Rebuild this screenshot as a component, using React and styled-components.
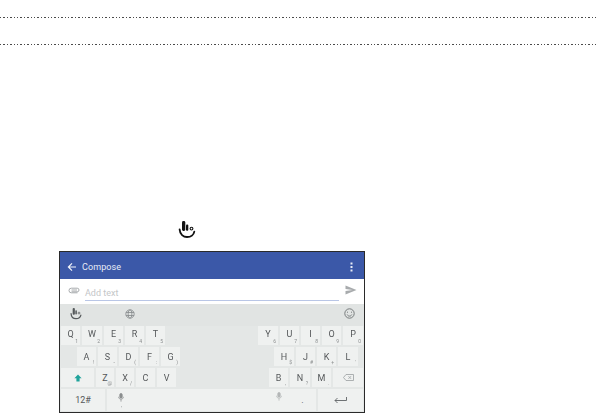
import React from "react";
import styled, { createGlobalStyle } from "styled-components";

const Global = createGlobalStyle`
  html, body { margin: 0; padding: 0; background: #fff; }
  body { font-family: Roboto, "Liberation Sans", sans-serif; width: 596px; height: 414px; overflow: hidden; }
`;
const Page = styled.div`display: flex; flex-direction: column; width: 596px; height: 414px;`;
const Rule = styled.div`
  height: 1px; margin-top: ${p => p.$top}px;
  background: repeating-linear-gradient(90deg, #4a4a4a 0, #4a4a4a 1.4px, transparent 1.4px, transparent 3.4px);
`;
const LogoLine = styled.div`display: flex; height: 18px; margin: 176px 0 12px 178px;`;
const Phone = styled.div`
  width: 304px; height: 160px; margin-left: 59px; box-sizing: content-box;
  border: 1px solid #2a2a2a; display: flex; flex-direction: column; overflow: hidden;
  background: #e4e7e6;
`;
const Blur = styled.div`filter: blur(0.45px); display: flex; flex-direction: column; height: 100%;`;
const Header = styled.header`
  height: 25px; padding: 2px 11px 0 7px; background: #3b58a8; color: #e8ecf6; display: flex; align-items: center;
  font-size: 9px; gap: 5px;
`;
const Title = styled.span`flex: 1; letter-spacing: 0.1px;`;
const InputRow = styled.div`
  height: 22px; padding: 0 7px 3px 8px; background: #fff; display: flex; align-items: center; gap: 5px;
`;
const Field = styled.div`
  flex: 1; height: 14px; border-bottom: 1px solid #b9c6e6; color: #c4c6c8; font-size: 9px;
  line-height: 14px; margin: 6px 1px 0 0;
`;
const Suggest = styled.div`
  height: 19px; display: flex; align-items: center; padding: 0 9px 3px 10px; background: #e1e4e3;
`;
const SuggestGlobe = styled.div`margin-left: 43px; flex: 1; display: flex;`;
const Keys = styled.div`display: flex; flex-direction: column; gap: 2px; padding: 0 1px;`;
const KeyRow = styled.div`
  display: flex; justify-content: space-between; height: ${p => p.$h || 19}px;
  padding: 0 ${p => p.$right || 0}px 0 ${p => p.$left || 0}px;
`;
const Group = styled.div`display: flex; gap: 2px;`;
const Key = styled.div`
  position: relative; width: ${p => p.$w}px; box-sizing: border-box; background: #eff1f0; color: #55585a;
  display: flex; align-items: center; justify-content: center; font-size: 9px;
  padding-bottom: ${p => p.$lift || 0}px;
`;
const Sub = styled.span`position: absolute; right: 2px; bottom: 1px; font-size: 5px; line-height: 5px; color: #8b8e8f;`;
const Space = styled(Key)`flex: 1; justify-content: flex-end; align-items: flex-start; padding: 3px 7px 0 0;`;
const MicKey = styled(Key)`
  flex-direction: column; padding-bottom: 5px;
  ${Sub} { right: 13px; bottom: 3px; }
`;

const Logo = ({ s = 18, c = "#111" }) => (
  <svg width={s} height={s} viewBox="0 0 18 18">
    <rect x="4" y="0" width="3.3" height="10" rx="1.4" fill={c} />
    <rect x="8" y="3.4" width="2.3" height="6.4" rx="1" fill={c} />
    <circle cx="13.5" cy="7.6" r="1.4" fill="none" stroke={c} strokeWidth="1.1" />
    <path d="M1.6 8.4C1.9 13.4 5.4 16 9 16s6.6-2 7.3-5.4" fill="none" stroke={c} strokeWidth="1.8" strokeLinecap="round" />
  </svg>
);
const Back = () => (
  <svg width="10" height="10" viewBox="0 0 10 10"><path d="M9 5H1.5M5 1.4 1.4 5 5 8.6" fill="none" stroke="#f2f4fa" strokeWidth="1.2" /></svg>
);
const Dots = () => (
  <svg width="3" height="10" viewBox="0 0 3 10" fill="#e8ecf6"><rect x=".5" y=".5" width="2" height="2" /><rect x=".5" y="4" width="2" height="2" /><rect x=".5" y="7.5" width="2" height="2" /></svg>
);
const Clip = () => (
  <svg width="12" height="8" viewBox="0 0 12 8" fill="none" stroke="#a9acae" strokeWidth="1"><path d="M3.5 5.8h5.7a1.8 1.8 0 0 0 0-3.6H3.3a2 2 0 0 0 0 4.6h6.2" /><path d="M3.5 4h5.5" /></svg>
);
const Send = () => (
  <svg width="12" height="10" viewBox="0 0 12 10"><path d="M.5.5 11.5 5 .5 9.5V6l7-1-7-1z" fill="#a8abad" /></svg>
);
const Globe = () => (
  <svg width="10" height="10" viewBox="0 0 10 10" fill="none" stroke="#85898b" strokeWidth=".8"><circle cx="5" cy="5" r="4.2" /><ellipse cx="5" cy="5" rx="1.9" ry="4.2" /><path d="M1 3.5h8M1 6.5h8" /></svg>
);
const Smile = () => (
  <svg width="11" height="11" viewBox="0 0 11 11" fill="none" stroke="#6b6f71" strokeWidth=".9"><circle cx="5.5" cy="5.5" r="4.7" /><path d="M3.2 6.6c.6 1.1 1.4 1.5 2.3 1.5s1.7-.4 2.3-1.5" /><path d="M3.5 3.7v1M7.5 3.7v1" /></svg>
);
const Shift = () => (
  <svg width="8" height="8" viewBox="0 0 8 8"><path d="M4 .5 7.6 4.3H5.6V7.5H2.4V4.3H.4z" fill="#1fa39b" /></svg>
);
const Backspace = () => (
  <svg width="11" height="7" viewBox="0 0 11 7" fill="none" stroke="#a4a8a9" strokeWidth=".9"><path d="M3 .5h7.5v6H3L.5 3.5z" /><path d="M5.5 2.2 8 4.8M8 2.2 5.5 4.8" /></svg>
);
const Enter = () => (
  <svg width="13" height="8" viewBox="0 0 13 8" fill="none" stroke="#5f6365" strokeWidth=".9"><path d="M12.5 1v3.5H1M3.5 2 1 4.5 3.5 7" /></svg>
);
const Mic = ({ c = "#b4b7b8" }) => (
  <svg width="6" height="9" viewBox="0 0 6 9" fill="none" stroke={c} strokeWidth=".8"><rect x="1.8" y=".5" width="2.4" height="4.6" rx="1.2" fill={c} /><path d="M.6 3.8c0 3.2 4.8 3.2 4.8 0M3 6.4V8.6" /></svg>
);

const LetterKey = ({ w, l, s, lift }) => (
  <Key $w={w} $lift={lift}>{l}{s && <Sub>{s}</Sub>}</Key>
);

export default function App() {
  return (
    <Page>
      <Global />
      <Rule $top={17} />
      <Rule $top={26} />
      <LogoLine><Logo /></LogoLine>
      <Phone>
        <Blur>
          <Header><Back /><Title>Compose</Title><Dots /></Header>
          <InputRow><Clip /><Field>Add text</Field><Send /></InputRow>
          <Suggest><Logo s={12} c="#55595b" /><SuggestGlobe><Globe /></SuggestGlobe><Smile /></Suggest>
          <Keys>
            <KeyRow>
              <Group>
                <LetterKey lift={4} w={19} l="Q" s="1" /><LetterKey lift={4} w={20} l="W" s="2" /><LetterKey lift={4} w={19} l="E" s="3" /><LetterKey lift={4} w={19} l="R" s="4" /><LetterKey lift={4} w={19} l="T" s="5" />
              </Group>
              <Group>
                <LetterKey lift={4} w={20} l="Y" s="6" /><LetterKey lift={4} w={19} l="U" s="7" /><LetterKey lift={4} w={19} l="I" s="8" /><LetterKey lift={4} w={19} l="O" s="9" /><LetterKey lift={4} w={20} l="P" s="0" />
              </Group>
            </KeyRow>
            <KeyRow $left={16} $right={5}>
              <Group>
                <LetterKey w={19} l="A" s="!" /><LetterKey w={19} l="S" s="-" /><LetterKey w={19} l="D" s="(" /><LetterKey w={19} l="F" s=":" /><LetterKey w={19} l="G" s=")" />
              </Group>
              <Group>
                <LetterKey w={20} l="H" s="$" /><LetterKey w={19} l="J" s="#" /><LetterKey w={19} l="K" s="+" /><LetterKey w={20} l="L" s="'" />
              </Group>
            </KeyRow>
            <KeyRow>
              <Group>
                <Key $w={33}><Shift /></Key><LetterKey w={18} l="Z" s="@" /><LetterKey w={18} l="X" s="/" /><LetterKey w={19} l="C" /><LetterKey w={19} l="V" />
              </Group>
              <Group>
                <LetterKey w={19} l="B" s="," /><LetterKey w={20} l="N" s="?" /><LetterKey w={19} l="M" s="." /><Key $w={30}><Backspace /></Key>
              </Group>
            </KeyRow>
            <KeyRow $h={22}>
              <Group>
                <Key $w={44}>12#</Key><MicKey $w={28}><Mic c="#8b8e8f" /><Sub>,</Sub></MicKey>
              </Group>
              <Space><Mic /></Space>
              <Group>
                <Key $w={27}>.</Key><Key $w={45}><Enter /></Key>
              </Group>
            </KeyRow>
          </Keys>
        </Blur>
      </Phone>
    </Page>
  );
}
